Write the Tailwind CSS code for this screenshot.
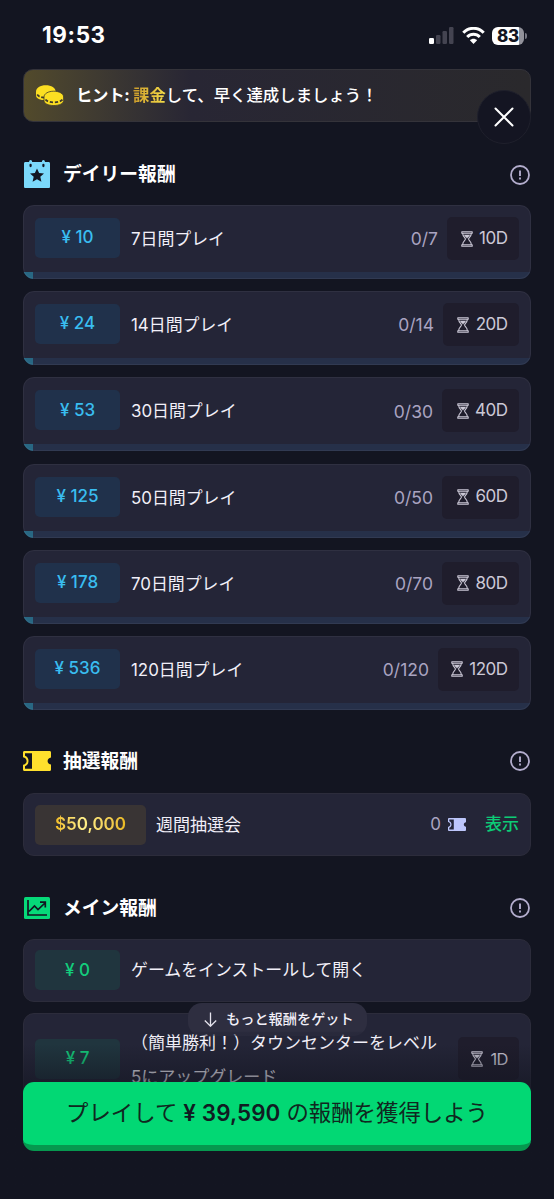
<!DOCTYPE html>
<html lang="ja">
<head>
<meta charset="utf-8">
<title>報酬</title>
<script src="https://cdn.jsdelivr.net/npm/@tailwindcss/browser@4"></script>
</head>
<body class="bg-[#131521]">
<svg class="hidden">
  <symbol id="glass" viewBox="0 0 12 16"><path d="M.8.8h10.400v1.500H.8zM.8 13.700h10.400v1.500H.8zM1.700 2.500c0 3.200 2.700 3.700 2.700 5.500s-2.700 2.300-2.700 5.500M10.300 2.500c0 3.200-2.700 3.700-2.700 5.500s2.700 2.300 2.700 5.500" fill="none" stroke="currentColor" stroke-width="1.100" stroke-linejoin="round"/><path d="M3 3.800h6c-.3 1.600-2.300 2.200-3 3.900-.7-1.700-2.700-2.300-3-3.900z" fill="currentColor"/></symbol>
  <symbol id="info" viewBox="0 0 20 20"><circle cx="10" cy="10" r="9" fill="none" stroke="currentColor" stroke-width="1.800"/><path d="M10 5.400v5.600M10 12.500v1.900" stroke="currentColor" stroke-width="1.900"/></symbol>
  <symbol id="ticket" viewBox="0 0 28 20"><path fill-rule="evenodd" fill="currentColor" d="M1.500 0h25C27.500 0 28 .6 28 1.500V6.500c-2 .3-3.400 1.700-3.400 3.500s1.400 3.200 3.400 3.500v5c0 .9-.5 1.500-1.500 1.500h-25C.5 20 0 19.400 0 18.500V13.800c2.300-.5 3.600-1.900 3.600-3.800S2.300 6.700 0 6.200V1.500C0 .6.5 0 1.500 0zM2 2.300v2.500C4.300 5.600 5.500 7.600 5.500 10s-1.200 4.400-3.500 5.200v2.500h7V2.300z"/></symbol>
</svg>
<div class="relative flex h-[1199px] w-[554px] flex-col overflow-hidden bg-[#131521] px-[23px] font-['Inter','Noto_Sans_CJK_JP',sans-serif] text-[#f1eff8]">

  <div class="flex h-[69px] shrink-0 items-center justify-between pl-[19px] pr-[4px] pt-[2px]">
    <div class="text-[22.500px] font-bold leading-none tracking-[0.600px] text-white">19:53</div>
    <div class="flex items-center">
      <svg class="h-[17px] w-[25px]" viewBox="0 0 25 17"><rect y="11" width="5" height="6" rx="1.200" fill="#fff"/><g fill="#444451"><rect x="7" y="8" width="4.500" height="9" rx="1.200"/><rect x="13.500" y="4" width="4.500" height="13" rx="1.200"/><rect x="20" width="4.500" height="17" rx="1.200"/></g></svg>
      <svg class="ml-[8px] h-[17px] w-[23px]" viewBox="0 0 23 17" fill="none" stroke="#fff" stroke-width="3"><path d="M1.300 5.800C7-.2 16-.2 21.700 5.800"/><path d="M5.200 10c3.600-3.700 9-3.700 12.600 0"/><path d="M11.500 17l-3.600-3.800c2.100-2 5.100-2 7.200 0z" fill="#fff" stroke="none"/></svg>
      <div class="ml-[7px] flex h-[18px] w-[32px] items-center justify-center rounded-[6px] bg-linear-to-r from-white from-83% to-[#92929b] to-83% text-[17px] font-extrabold leading-[18px] tracking-[-0.3px] text-[#131521]"><span>83</span></div>
      <div class="ml-[1px] h-[6px] w-[2px] rounded-r-full bg-[#777783]"></div>
    </div>
  </div>

  <div class="relative flex h-[53px] shrink-0 items-center rounded-[10px] border border-[#34333a] bg-linear-to-r from-[#524a2b] via-[#282634] via-33% to-[#2a292c] pl-[12px]">
    <svg class="h-[21px] w-[28px]" viewBox="0 0 28 21"><path fill="#fcdf22" d="M0 6.500C0 3 4.200.3 9.800.3s9.800 2.700 9.800 6.200v4c0 3-4.200 4.700-9.800 4.700S0 13.500 0 10.500z"/><path fill="#fcdf22" stroke="#403b2c" stroke-width=".8" d="M8 12c0-3.300 4.200-5.800 9.800-5.800S27.600 8.700 27.600 12v3.500c0 3-4.200 5-9.800 5S8 18.500 8 15.500z"/><path fill="none" stroke="#403b2c" stroke-width="1.800" stroke-dasharray="3.200 1.800" d="M1.200 9.500c1.300 2 3.800 3 6.800 3.200M9.500 14.500c2.600 3.700 14 3.800 17 0"/></svg>
    <div class="ml-[12px] whitespace-nowrap text-[16.400px] font-medium leading-none text-white"><span class="font-bold tracking-[-0.300px]">ヒント: </span><span class="bg-linear-to-r from-[#c99a2b] to-[#f7df49] bg-clip-text font-bold text-transparent">課金</span>して、早く達成しましょう！</div>
    <div class="absolute left-[453px] top-[20px] flex size-[54px] items-center justify-center rounded-full border border-[#1f202c] bg-[#141522]">
      <svg class="size-[20px]" viewBox="0 0 20 20"><path d="M1.500 1.500l17 17M18.500 1.500l-17 17" stroke="#fff" stroke-width="2" stroke-linecap="round"/></svg>
    </div>
  </div>

  <div class="mt-[38px] flex h-[30px] shrink-0 items-center">
    <svg class="ml-[1px] mt-[-2px] h-[28px] w-[26px]" viewBox="0 0 26 28"><path fill="#7bd9fb" d="M1.500 2h3.600V1.500a1.500 1.500 0 0 1 3 0V2h9.800V1.500a1.500 1.500 0 0 1 3 0V2h3.600c1 0 1.500.6 1.500 1.500v23c0 1-.5 1.500-1.500 1.500h-23C.5 28 0 27.500 0 26.500v-23C0 2.600.5 2 1.500 2z"/><path stroke="#131521" stroke-width="2.200" stroke-linecap="round" d="M6.600 4.800v1.300M19.400 4.800v1.300"/><path fill="#131521" d="M13 8.500l2.100 4.500 4.900.5-3.700 3.300 1.100 4.900L13 19.200l-4.400 2.500 1.100-4.900L6 13.500l4.900-.5z"/></svg>
    <h2 class="ml-[13px] text-[18.800px] font-bold leading-none text-white">デイリー報酬</h2>
    <svg class="ml-auto mr-[1px] size-[20px] text-[#b3adcd]"><use href="#info"/></svg>
  </div>
  <div id="daily" class="mt-[15px] flex shrink-0 flex-col gap-[12.200px]"></div>

  <div class="mt-[36.500px] flex h-[30px] shrink-0 items-center">
    <svg class="h-[20px] w-[28px] text-[#ffe02d]"><use href="#ticket"/></svg>
    <h2 class="ml-[12px] mt-[2px] text-[18.800px] font-bold leading-none text-white">抽選報酬</h2>
    <svg class="ml-auto mr-[1px] size-[20px] text-[#b3adcd]"><use href="#info"/></svg>
  </div>
  <div class="mt-[17px] flex h-[63px] shrink-0 items-center rounded-[11px] border border-[#2c2c3b] bg-[#242537] px-[11px]">
    <div class="flex h-[40px] w-[111px] shrink-0 items-center justify-center rounded-[5px] bg-[#393434] text-[17px] font-semibold"><span class="bg-linear-to-r from-[#f2bd20] via-[#fff08a] via-40% to-[#eab91d] bg-clip-text text-transparent">$50,000</span></div>
    <div class="ml-[10px] mt-[1px] text-[17px] leading-none">週間抽選会</div>
    <div class="ml-auto text-[17px] leading-none text-[#aaa4c1]">0</div>
    <svg class="ml-[7px] h-[13px] w-[18px] text-[#bdc6fb]"><use href="#ticket"/></svg>
    <div class="ml-[19px] text-[17px] font-medium leading-none text-[#0ccb76]">表示</div>
  </div>

  <div class="mt-[36.500px] flex h-[30px] shrink-0 items-center">
    <svg class="ml-[1px] h-[22px] w-[26px]" viewBox="0 0 26 22"><rect width="26" height="22" rx="1.500" fill="#06d979"/><path d="M4 3v15h19M5 14.500l5.500-5.500 3.500 3.500L21 6M16 5.200H21.300V10.500" fill="none" stroke="#131521" stroke-width="1.700"/></svg>
    <h2 class="ml-[13px] mt-[2px] text-[18.800px] font-bold leading-none text-white">メイン報酬</h2>
    <svg class="ml-auto mr-[1px] size-[20px] text-[#b3adcd]"><use href="#info"/></svg>
  </div>
  <div class="mt-[16px] flex h-[63px] shrink-0 items-center rounded-[11px] border border-[#2c2c3b] bg-[#242537] px-[11px]">
    <div class="flex h-[40px] w-[85px] shrink-0 items-center justify-center rounded-[5px] bg-[#20353e] text-[17px] font-medium text-[#13cd7c]">¥ 0</div>
    <div class="ml-[11px] mt-[1px] text-[16.900px] leading-none">ゲームをインストールして開く</div>
  </div>
  <div class="mt-[11px] flex h-[92px] shrink-0 items-center rounded-[11px] border border-[#2c2c3b] bg-[#242537] px-[11px]">
    <div class="flex h-[40px] w-[85px] shrink-0 items-center justify-center rounded-[5px] bg-[#20353e] text-[17px] font-medium text-[#13cd7c]">¥ 7</div>
    <div class="ml-[11px] mt-[3px] whitespace-nowrap text-[17px] leading-[34px]">（簡単勝利！）タウンセンターをレベル<br>5にアップグレード</div>
    <div class="ml-auto flex h-[43px] w-[61px] shrink-0 items-center justify-end gap-[7px] rounded-[5px] bg-[#1f1d2c] pr-[11px] text-[16.500px] text-[#cbc8d6]"><svg class="h-[16px] w-[12px]"><use href="#glass"/></svg><span class="tracking-[-0.5px]">1D</span></div>
  </div>

  <div class="absolute bottom-0 left-0 right-0 h-[165px] bg-linear-to-b from-[#131521]/0 from-[10px] to-[#131521] to-[78px]"></div>
  <div class="absolute left-[188px] top-[1003px] flex h-[33px] w-[179px] items-center rounded-[14px] bg-linear-to-b from-[#2e2e40] from-85% to-[#2e2e40]/50 to-90% pl-[16px]">
    <svg class="h-[15px] w-[13px]" viewBox="0 0 13 15"><path d="M6.500.5v13.500M.8 8.500l5.700 5.700 5.700-5.700" fill="none" stroke="#e5e3ed" stroke-width="1.300"/></svg>
    <span class="mb-[1px] ml-[9px] whitespace-nowrap text-[14.200px] font-medium leading-none">もっと報酬をゲット</span>
  </div>
  <div class="absolute left-[23px] top-[1082px] flex h-[69px] w-[508px] items-center justify-center whitespace-nowrap rounded-[11px] border-b-[6px] border-[#06984f] bg-[#02d874] pb-[1px] text-[22.400px] leading-none text-[#102720]">プレイして<b class="mx-[6px] font-semibold tracking-[0.100px] text-[#101c22]">¥ 39,590</b>の報酬を獲得しよう</div>
</div>
<script>
const rows = [[10,7,10,72],[24,14,20,76],[53,30,40,77],[125,50,60,77],[178,70,80,77],[536,120,120,81]];
document.getElementById('daily').innerHTML = rows.map(([yen, days, limit, width]) => `
  <div class="relative flex h-[74px] flex-col overflow-hidden rounded-[11px] bg-[#242537]">
    <div class="flex h-[67px] items-center px-[12px]">
      <div class="mt-[-1px] flex h-[40px] w-[85px] items-center justify-center rounded-[5px] bg-[#20314b] text-[17px] font-medium text-[#39bdf0]">¥ ${yen}</div>
      <div class="ml-[11px] mt-[2px] whitespace-nowrap text-[16.900px] leading-none">${days}日間プレイ</div>
      <div class="ml-auto mr-[9px] mt-[1px] text-[17.500px] leading-none text-[#aaa4c1]">0/${days}</div>
      <div class="flex h-[43px] items-center justify-end gap-[6.500px] rounded-[5px] bg-[#1f1d2c] pr-[11.500px] text-[17px] tracking-[-0.500px] text-[#cbc8d6]" style="width:${width}px"><svg class="h-[16px] w-[12px] shrink-0"><use href="#glass"/></svg>${limit}D</div>
    </div>
    <div class="h-[7px] bg-[#263049]"><div class="h-full w-[10px] bg-[#286783]"></div></div>
    <div class="pointer-events-none absolute inset-0 rounded-[11px] border border-white/5"></div>
  </div>`).join('');
</script>
</body>
</html>
